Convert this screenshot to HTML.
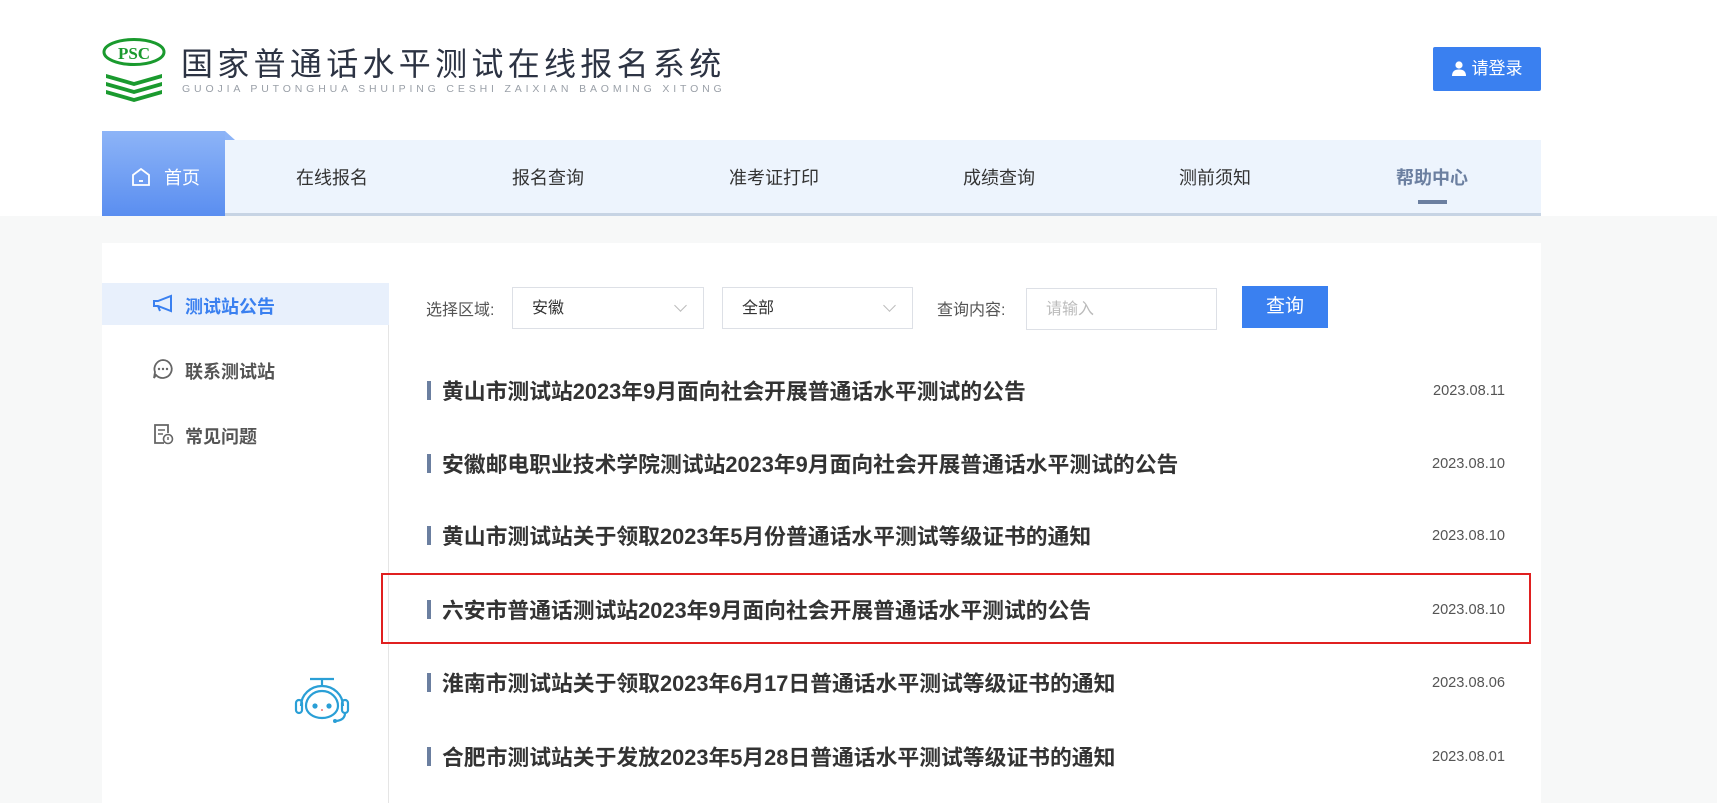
<!DOCTYPE html>
<html><head><meta charset="utf-8"><style>
*{margin:0;padding:0;box-sizing:border-box}
body{width:1717px;height:795px;overflow:hidden;background:#f7f8f8;font-family:"Liberation Sans","Noto Sans CJK SC",sans-serif;position:relative}
.hdr{position:absolute;left:0;top:0;width:1717px;height:216px;background:#fff}
.abs{position:absolute}
.title{left:181px;top:39px;font-size:32px;letter-spacing:4.3px;color:#2c3343;white-space:nowrap}
.sub{left:182px;top:83px;font-size:10.5px;letter-spacing:3.85px;color:#9aa0a8;white-space:nowrap}
.login{left:1433px;top:47px;width:108px;height:44px;background:#3a80f0;border-radius:2px;color:#fff;font-size:17px;line-height:44px;text-align:center}
.nav{left:102px;top:140px;width:1439px;height:76px;background:#edf4fd;border-bottom:3px solid #c7d4e4}
.home{left:102px;top:131px;width:123px;height:85px;background:linear-gradient(#8db4f7,#5a8ef0);color:#fff;font-size:18px}
.ni{top:164px;font-size:18px;color:#333;transform:translateX(-50%);white-space:nowrap}
.card{left:102px;top:243px;width:1439px;height:560px;background:#fff}
.side{left:102px;top:283px;width:287px;height:520px;border-right:1px solid #e5e5e5}
.act{left:102px;top:283px;width:287px;height:42px;background:#e8f0fc}
.si{left:185px;font-size:18px;font-weight:bold;color:#555}
.lbl{font-size:16px;color:#555;top:296px}
.sel,.inp{top:287px;height:42px;border:1px solid #dde0e6;font-size:16px;color:#333;padding-left:19px;line-height:42px}
.sel:after{content:"";position:absolute;right:18px;top:13px;width:8px;height:8px;border-right:1px solid #bbb;border-bottom:1px solid #bbb;transform:rotate(45deg)}
.row{left:427px;width:1078px;height:30px}
.row .b{position:absolute;left:0;top:6px;width:4px;height:19px;background:#6b7fa0}
.row .t{position:absolute;left:15px;top:0px;font-size:21.8px;font-weight:bold;color:#333;white-space:nowrap}
.row .d{position:absolute;right:0;top:8px;font-size:14.6px;color:#555}
</style></head><body>
<div class="hdr"></div>
<svg class="abs" style="left:102px;top:38px" width="66" height="64" viewBox="0 0 66 64">
<ellipse cx="32" cy="14" rx="30" ry="12.5" fill="none" stroke="#1a9a2e" stroke-width="3"/>
<text x="32" y="21" text-anchor="middle" font-family="Liberation Serif" font-weight="bold" font-size="17" fill="#1a9a2e">PSC</text>
<g fill="#1a9a2e"><path d="M4 36 L32 44 L60 36 L60 40 L32 48 L4 40Z"/><path d="M4 44 L32 52 L60 44 L60 48 L32 56 L4 48Z"/><path d="M4 52 L32 60 L60 52 L60 56 L32 64 L4 56Z"/></g></svg>
<div class="abs title">国家普通话水平测试在线报名系统</div>
<div class="abs sub">GUOJIA PUTONGHUA SHUIPING CESHI ZAIXIAN BAOMING XITONG</div>
<div class="abs login"><svg width="14" height="15" viewBox="0 0 14 15" style="vertical-align:-2px;margin-right:6px"><circle cx="7" cy="4" r="3.6" fill="#fff"/><path d="M0 15 Q0 8.5 7 8.5 Q14 8.5 14 15Z" fill="#fff"/></svg>请登录</div>
<div class="abs nav"></div>
<div class="abs" style="left:225px;top:131px;width:0;height:0;border-left:10px solid #8db4f7;border-top:9px solid transparent"></div>
<div class="abs home"><svg class="abs" style="left:29px;top:36px" width="20" height="20" viewBox="0 0 20 20"><path d="M2 8 L10 2 L18 8 L18 18 L2 18Z" fill="none" stroke="#fff" stroke-width="1.8"/><path d="M8 14h4" stroke="#fff" stroke-width="1.8"/></svg><span class="abs" style="left:62px;top:33px">首页</span></div>
<div class="abs ni" style="left:332px">在线报名</div>
<div class="abs ni" style="left:548px">报名查询</div>
<div class="abs ni" style="left:774px">准考证打印</div>
<div class="abs ni" style="left:999px">成绩查询</div>
<div class="abs ni" style="left:1215px">测前须知</div>
<div class="abs ni" style="left:1432px;color:#6b7fa0;font-weight:bold">帮助中心</div>
<div class="abs" style="left:1418px;top:200px;width:29px;height:4px;background:#6b7fa0"></div>
<div class="abs card"></div>
<div class="abs side"></div>
<div class="abs act"></div>
<svg class="abs" style="left:152px;top:294px" width="22" height="20" viewBox="0 0 22 20"><path d="M2 7 L6 7 L19 2 L19 17 L6 12 L2 12Z M6 12 L8 17" fill="none" stroke="#3a80f0" stroke-width="2"/></svg>
<div class="abs si" style="top:293px;color:#3a80f0">测试站公告</div>
<svg class="abs" style="left:152px;top:358px" width="22" height="22" viewBox="0 0 22 22"><path d="M11 2 A9 9 0 1 1 4 17 L2 20 L3 14 A9 9 0 0 1 11 2Z" fill="none" stroke="#666" stroke-width="1.8"/><circle cx="7" cy="11" r="1.2" fill="#666"/><circle cx="11" cy="11" r="1.2" fill="#666"/><circle cx="15" cy="11" r="1.2" fill="#666"/></svg>
<div class="abs si" style="top:358px">联系测试站</div>
<svg class="abs" style="left:152px;top:423px" width="22" height="22" viewBox="0 0 22 22"><path d="M12 20 H3 V2 H16 V10" fill="none" stroke="#666" stroke-width="1.8"/><path d="M6 7h7M6 11h5" stroke="#666" stroke-width="1.6"/><circle cx="16" cy="16" r="4.5" fill="#fff" stroke="#666" stroke-width="1.6"/><path d="M16 14v3" stroke="#666" stroke-width="1.5"/></svg>
<div class="abs si" style="top:423px">常见问题</div>
<div class="abs lbl" style="left:426px">选择区域:</div>
<div class="abs sel" style="left:512px;width:192px">安徽</div>
<div class="abs sel" style="left:722px;width:191px">全部</div>
<div class="abs lbl" style="left:937px">查询内容:</div>
<div class="abs inp" style="left:1026px;width:191px;color:#bbb;top:288px">请输入</div>
<div class="abs" style="left:1242px;top:286px;width:86px;height:42px;background:#3a80f0;color:#fff;font-size:19px;line-height:42px;text-align:center">查询</div>
<div class="abs row" style="top:375px"><i class="b"></i><span class="t">黄山市测试站2023年9月面向社会开展普通话水平测试的公告</span><span class="d">2023.08.11</span></div>
<div class="abs row" style="top:448px"><i class="b"></i><span class="t">安徽邮电职业技术学院测试站2023年9月面向社会开展普通话水平测试的公告</span><span class="d">2023.08.10</span></div>
<div class="abs row" style="top:520px"><i class="b"></i><span class="t">黄山市测试站关于领取2023年5月份普通话水平测试等级证书的通知</span><span class="d">2023.08.10</span></div>
<div class="abs row" style="top:594px"><i class="b"></i><span class="t">六安市普通话测试站2023年9月面向社会开展普通话水平测试的公告</span><span class="d">2023.08.10</span></div>
<div class="abs row" style="top:667px"><i class="b"></i><span class="t">淮南市测试站关于领取2023年6月17日普通话水平测试等级证书的通知</span><span class="d">2023.08.06</span></div>
<div class="abs row" style="top:741px"><i class="b"></i><span class="t">合肥市测试站关于发放2023年5月28日普通话水平测试等级证书的通知</span><span class="d">2023.08.01</span></div>
<div class="abs" style="left:381px;top:573px;width:1150px;height:71px;border:2px solid #e02020"></div>
<svg class="abs" style="left:292px;top:676px" width="60" height="50" viewBox="0 0 60 50"><g fill="none" stroke="#2a9fd6" stroke-width="2.2"><path d="M18 3h24M30 3v6"/><path d="M9 30 A21 20 0 0 1 51 30"/><path d="M14 30 A16 15 0 0 1 46 30 A16 12 0 0 1 14 30Z"/><rect x="4" y="24" width="6" height="13" rx="3"/><rect x="50" y="24" width="6" height="13" rx="3"/><path d="M53 37 Q53 44 44 45"/></g><circle cx="43" cy="45" r="2" fill="#2a9fd6"/><circle cx="23" cy="30" r="2.6" fill="#2a9fd6"/><circle cx="37" cy="30" r="2.6" fill="#2a9fd6"/><circle cx="30" cy="34" r="0.9" fill="#e44"/></svg>
</body></html>
